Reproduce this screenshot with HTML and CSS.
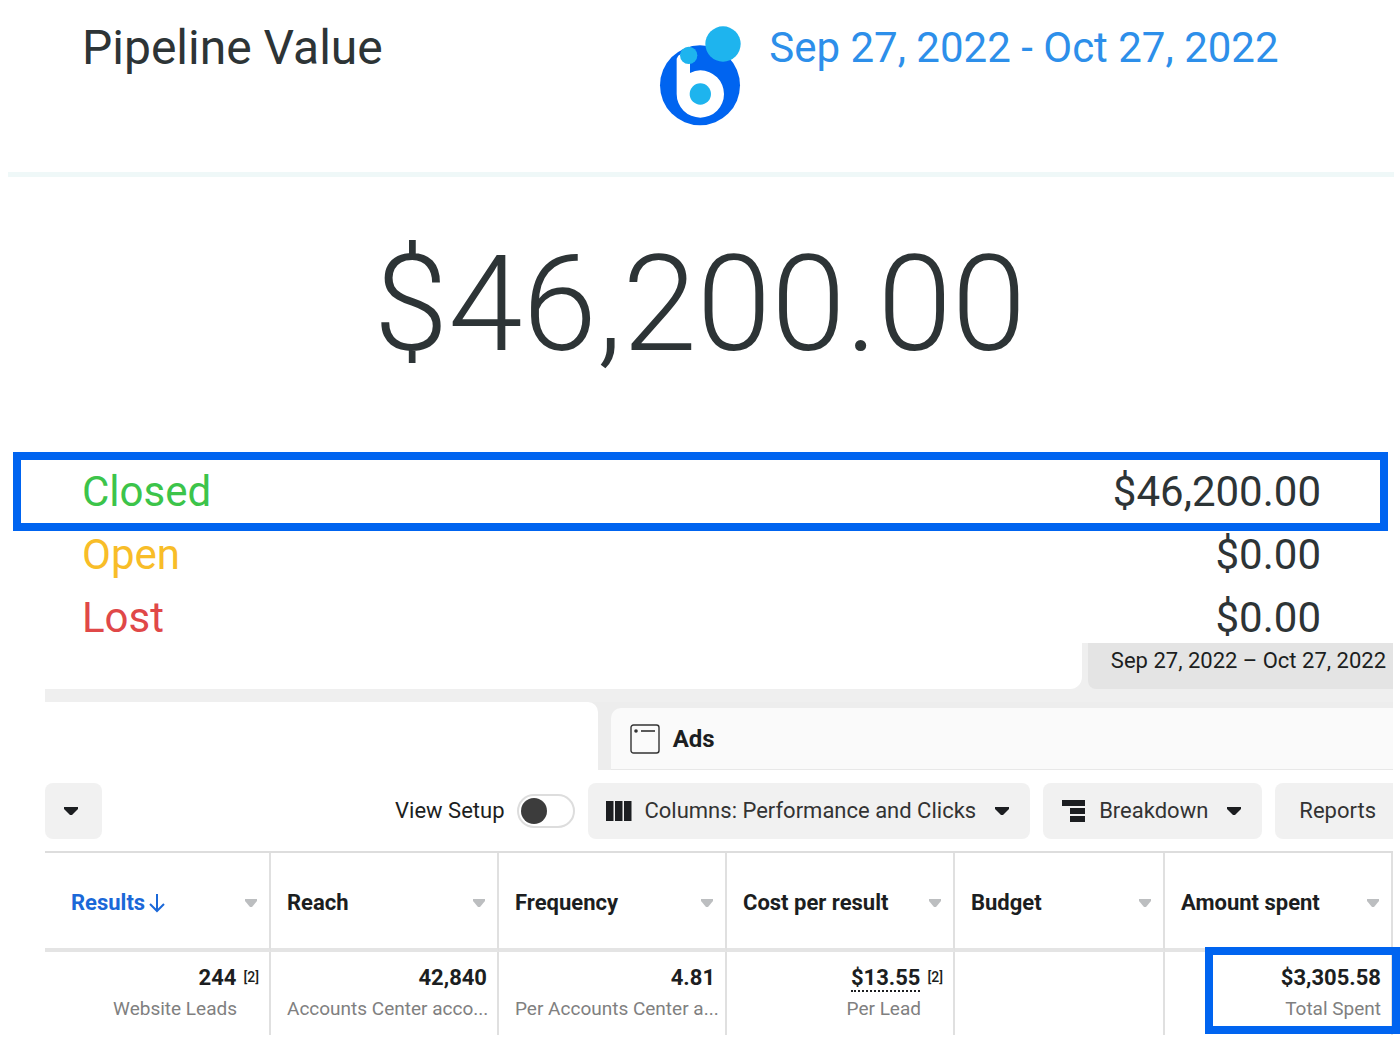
FILE: index.html
```html
<!DOCTYPE html>
<html lang="en">
  <head>
    <meta charset="utf-8" />
    <title>Pipeline Value</title>
    <meta name="viewport" content="width=device-width, initial-scale=1.0" />
    <link rel="stylesheet" href="styles.css">
  </head>
  <body>
    <section class="pipeline">
      <header class="pipeline-header">
        <h1>Pipeline Value</h1>
        <svg class="logo" viewBox="58 46 246 300" aria-hidden="true">
          <circle cx="181" cy="224" r="120" fill="#0064f0" />
          <path d="M111 250V144Q114 134 124 130L151 150V187Q166 179 182 179A71 71 0 1 1 111 250Z" fill="#fff" />
          <circle cx="182" cy="250" r="32" fill="#1eb4ee" />
          <circle cx="147" cy="134" r="26" fill="#1eb4ee" />
          <circle cx="250" cy="100" r="53" fill="#1eb4ee" />
        </svg>
        <a class="date-link" href="#">Sep 27, 2022 - Oct 27, 2022</a>
      </header>
      <p class="total">$46,200.00</p>
      <dl class="stages">
        <div class="stage highlighted">
          <dt class="closed">Closed</dt>
          <dd>$46,200.00</dd>
        </div>
        <div class="stage">
          <dt class="open">Open</dt>
          <dd>$0.00</dd>
        </div>
        <div class="stage">
          <dt class="lost">Lost</dt>
          <dd>$0.00</dd>
        </div>
      </dl>
    </section>

    <section class="ads">
      <div class="ads-top">
        <div class="ads-top-panel"></div>
        <button class="date-button">Sep 27, 2022 – Oct 27, 2022</button>
      </div>
      <nav class="tabs">
        <div class="tab-active"></div>
        <a class="tab" href="#">
          <svg width="30" height="30" viewBox="0 0 30 30" fill="none" stroke="#333" aria-hidden="true">
            <rect x="1" y="1" width="28" height="28" rx="2.5" stroke-width="1.4" />
            <path d="M11 7H25" stroke-width="1.6" />
            <circle cx="6" cy="7" r="1.8" fill="#333" stroke="none" />
          </svg>
          Ads
        </a>
      </nav>
      <div class="toolbar">
        <button class="tool tool-menu" aria-label="More">
          <svg class="caret" viewBox="0 0 16 10"><path d="M1 1H15V3L9 9H7L1 3Z" /></svg>
        </button>
        <label class="setup" for="view-setup">View Setup</label>
        <input class="toggle" type="checkbox" id="view-setup" />
        <button class="tool">
          <svg width="26" height="22" viewBox="0 0 26 22" aria-hidden="true">
            <path d="M0 1H7.5V21H0ZM9 1H16.5V21H9ZM18 1H25.5V21H18Z" />
          </svg>
          Columns: Performance and Clicks
          <svg class="caret" viewBox="0 0 16 10"><path d="M1 1H15V3L9 9H7L1 3Z" /></svg>
        </button>
        <button class="tool">
          <svg width="26" height="22" viewBox="0 0 26 22" aria-hidden="true">
            <path d="M1 0H24V6H1ZM9 8H24V14H9ZM9 16H24V22H9Z" />
          </svg>
          Breakdown
          <svg class="caret" viewBox="0 0 16 10"><path d="M1 1H15V3L9 9H7L1 3Z" /></svg>
        </button>
        <button class="tool tool-last">Reports</button>
      </div>
      <table>
        <colgroup>
          <col class="col-first" />
          <col class="col-wide" />
          <col class="col-wide" />
          <col class="col-wide" />
          <col class="col-narrow" />
          <col class="col-wide" />
        </colgroup>
        <thead>
          <tr>
            <th class="sorted">
              <div class="heading">
                <span>Results</span>
                <svg class="arrow" viewBox="0 0 16 20"><path d="M8 1V18M1 11L8 18L15 11" /></svg>
                <svg class="caret" viewBox="0 0 16 10"><path d="M2 1H14V3L9 9H7L2 3Z" /></svg>
              </div>
            </th>
            <th>
              <div class="heading">
                <span>Reach</span>
                <svg class="caret" viewBox="0 0 16 10"><path d="M2 1H14V3L9 9H7L2 3Z" /></svg>
              </div>
            </th>
            <th>
              <div class="heading">
                <span>Frequency</span>
                <svg class="caret" viewBox="0 0 16 10"><path d="M2 1H14V3L9 9H7L2 3Z" /></svg>
              </div>
            </th>
            <th>
              <div class="heading">
                <span>Cost per result</span>
                <svg class="caret" viewBox="0 0 16 10"><path d="M2 1H14V3L9 9H7L2 3Z" /></svg>
              </div>
            </th>
            <th>
              <div class="heading">
                <span>Budget</span>
                <svg class="caret" viewBox="0 0 16 10"><path d="M2 1H14V3L9 9H7L2 3Z" /></svg>
              </div>
            </th>
            <th>
              <div class="heading">
                <span>Amount spent</span>
                <svg class="caret" viewBox="0 0 16 10"><path d="M2 1H14V3L9 9H7L2 3Z" /></svg>
              </div>
            </th>
          </tr>
        </thead>
        <tbody>
          <tr>
            <td class="noted">
              <div class="value">244<span class="note">[2]</span></div>
              <div class="unit">Website Leads</div>
            </td>
            <td>
              <div class="value">42,840</div>
              <div class="unit">Accounts Center acco...</div>
            </td>
            <td>
              <div class="value">4.81</div>
              <div class="unit">Per Accounts Center a...</div>
            </td>
            <td class="noted">
              <div class="value"><span class="dotted">$13.55</span><span class="note">[2]</span></div>
              <div class="unit">Per Lead</div>
            </td>
            <td></td>
            <td class="spent">
              <div class="value">$3,305.58</div>
              <div class="unit">Total Spent</div>
            </td>
          </tr>
        </tbody>
      </table>
    </section>
  </body>
</html>
```

FILE: styles.css
```css
*,
*::before,
*::after {
  box-sizing: border-box;
}
body {
  margin: 0;
  background: #fff;
  color: #2d3436;
  font-family: Roboto, "Liberation Sans", sans-serif;
}
h1,
p,
dl,
dd {
  margin: 0;
}
svg {
  flex: none;
}

/* Pipeline card */
.pipeline-header {
  display: flex;
  align-items: flex-start;
  height: 177px;
  margin: 0 6px 0 8px;
  padding: 20px 0 0 74px;
  border-bottom: 5px solid #eff8f8;
}
h1 {
  flex: 0 0 44%;
  font-size: 48px;
  font-weight: 400;
  line-height: 56px;
}
.logo {
  width: 82px;
  height: 100px;
  margin: 6px 28px 0 0;
}
.date-link {
  color: #2d8fea;
  font-size: 42px;
  line-height: 56px;
  text-decoration: none;
  white-space: nowrap;
}
.total {
  padding: 48px 0 75px;
  font-size: 134px;
  font-weight: 300;
  line-height: 160px;
  text-align: center;
}
.stage {
  display: flex;
  justify-content: space-between;
  margin: 0 20px 0 21px;
  padding: 0 59px 0 61px;
  font-size: 42px;
  line-height: 63px;
}
.highlighted {
  outline: 8px solid #0064f0;
}
.closed {
  color: #3cc44a;
}
.open {
  color: #f8bd28;
}
.lost {
  color: #e04848;
}

/* Ads manager */
.ads {
  margin: -6px 7px 0 45px;
  color: #1c1e21;
}
.ads-top {
  display: flex;
  gap: 6px;
  height: 59px;
  padding-bottom: 13px;
  background: #efefef;
}
.ads-top-panel {
  flex: 1;
  background: #fff;
  border-radius: 0 0 12px 0;
}
.date-button {
  padding: 0 7px 12px 23px;
  border: 0;
  border-radius: 0 0 0 8px;
  background: #e4e4e4;
  color: inherit;
  font: inherit;
  font-size: 22px;
}
.tabs {
  display: flex;
  gap: 13px;
  height: 68px;
  background: #ededed;
}
.tab-active {
  flex: 0 0 41%;
  background: #fff;
  border-radius: 0 10px 0 0;
}
.tab {
  display: flex;
  flex: 1;
  align-items: center;
  gap: 13px;
  margin-top: 6px;
  padding-left: 19px;
  border-bottom: 1px solid #e8e8e8;
  border-radius: 10px 0 0 0;
  background: #fafafa;
  color: inherit;
  font-size: 24px;
  font-weight: 700;
  text-decoration: none;
}
.toolbar {
  display: flex;
  align-items: center;
  gap: 13px;
  height: 81px;
}
.tool {
  display: flex;
  align-items: center;
  gap: 12px;
  height: 56px;
  padding: 0 20px 0 18px;
  border: 0;
  border-radius: 8px;
  background: #f1f1f1;
  color: #333;
  font: inherit;
  font-size: 22px;
  white-space: nowrap;
}
.tool svg {
  fill: #1c1e21;
}
.tool .caret {
  margin-left: 6px;
}
.tool-menu {
  padding: 0 23px 0 12px;
}
.tool-last {
  padding: 0 17px 0 24px;
  border-radius: 8px 0 0 8px;
}
.caret {
  width: 16px;
  height: 10px;
}
.setup {
  margin-left: auto;
  font-size: 22px;
}
.toggle {
  appearance: none;
  width: 58px;
  height: 34px;
  margin: 0;
  padding: 2px;
  border: 2px solid #ddd;
  border-radius: 17px;
}
.toggle::before {
  content: "";
  display: block;
  width: 26px;
  height: 26px;
  border-radius: 50%;
  background: #3c3c3c;
}
.toggle:checked::before {
  margin-left: auto;
}

table {
  width: 100%;
  border-spacing: 0;
  border-top: 2px solid #ddd;
  table-layout: fixed;
}
.col-first {
  width: 226px;
}
.col-wide {
  width: 228px;
}
.col-narrow {
  width: 210px;
}
th,
td {
  padding: 0 10px 0 16px;
  border-right: 2px solid #e0e0e0;
}
th {
  height: 99px;
  border-bottom: 4px solid #e4e4e4;
  font-size: 22px;
  text-align: left;
}
.heading {
  display: flex;
  align-items: center;
  gap: 4px;
  padding-top: 4px;
  white-space: nowrap;
}
.heading .caret {
  margin-left: auto;
  fill: #bcbec0;
}
.sorted {
  padding-left: 26px;
  color: #1b68d8;
}
.arrow {
  width: 16px;
  height: 20px;
  fill: none;
  stroke: #1b68d8;
  stroke-width: 2;
}
td {
  height: 83px;
  padding-top: 10px;
  text-align: right;
  vertical-align: top;
  white-space: nowrap;
}
.value {
  font-size: 22px;
  font-weight: 700;
  line-height: 32px;
}
.unit {
  color: #808080;
  font-size: 19px;
  line-height: 30px;
}
.noted .unit {
  padding-right: 22px;
}
.note {
  margin-left: 7px;
  font-size: 14px;
  font-weight: 500;
  line-height: 14px;
  vertical-align: 3px;
}
.dotted {
  border-bottom: 2px dotted #1c1e21;
}
.spent {
  position: relative;
}
/* Frame drawn over the cell and its borders */
.spent::after {
  content: "";
  position: absolute;
  top: -5px;
  right: -9px;
  width: 195px;
  height: 87px;
  border: 8px solid #0064f0;
}
```
